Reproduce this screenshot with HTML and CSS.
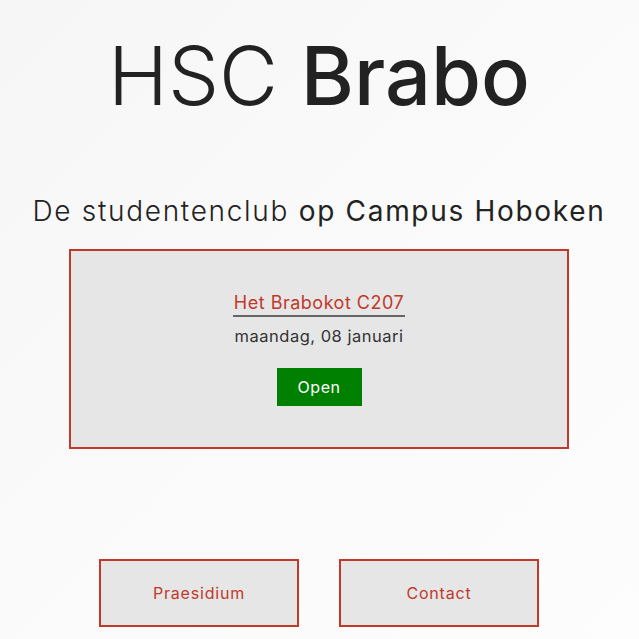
FILE: index.html
```html
<!DOCTYPE html>
<html lang="nl">
<head>
<meta charset="utf-8">
<title>HSC Brabo</title>
<link rel="stylesheet" href="styles.css">
</head>
<body>
<main class="page">
  <h1 class="title"><span class="title-light">HSC</span> <span class="title-bold">Brabo</span></h1>
  <h2 class="subtitle"><span class="subtitle-light">De studentenclub</span> op Campus Hoboken</h2>
  <section class="card">
    <a class="card-link" href="#">Het Brabokot C207</a>
    <p class="card-date">maandag, 08 januari</p>
    <span class="status">Open</span>
  </section>
  <nav class="links">
    <a class="link-box" href="#">Praesidium</a>
    <a class="link-box" href="#">Contact</a>
  </nav>
</main>
</body>
</html>
```

FILE: styles.css
```css
html, body {
  margin: 0;
  padding: 0;
  height: 100%;
}
body {
  background: linear-gradient(135deg, #f6f6f6 0%, #fafafa 50%, #fdfdfd 100%);
  font-family: Inter, "Noto Sans", "DejaVu Sans", sans-serif;
  color: #222;
}
.page {
  display: flex;
  flex-direction: column;
  align-items: center;
  padding: 28px 1px 0 0;
}
.title {
  margin: 0;
  font-size: 81px;
  line-height: 96px;
  font-weight: 300;
  color: #222;
}
.title-light { font-weight: 300; }
.title-bold { font-weight: 500; }
.subtitle {
  margin: 70px 0 0;
  font-size: 28px;
  line-height: 34px;
  font-weight: 400;
  letter-spacing: 1.7px;
  color: #222;
}
.subtitle-light { font-weight: 300; }
.card {
  margin-top: 21px;
  width: 496px;
  height: 196px;
  border: 2px solid #c0392b;
  background: #e6e6e6;
  display: flex;
  flex-direction: column;
  align-items: center;
}
.card-link {
  margin-top: 40px;
  font-size: 18px;
  line-height: 24px;
  letter-spacing: 0.5px;
  color: #c0392b;
  text-decoration: none;
  border-bottom: 2px solid #666;
  padding: 0 1px;
}
.card-date {
  margin: 8px 0 0;
  font-size: 16.5px;
  line-height: 22px;
  letter-spacing: 0.5px;
  color: #333;
  font-weight: 400;
}
.status {
  margin-top: 21px;
  width: 85px;
  height: 38px;
  display: flex;
  align-items: center;
  justify-content: center;
  background: #008000;
  color: #fff;
  font-size: 16px;
  letter-spacing: 0.5px;
}
.links {
  margin-top: 110px;
  display: flex;
  gap: 40px;
}
.link-box {
  width: 196px;
  height: 64px;
  border: 2px solid #c0392b;
  background: #e6e6e6;
  display: flex;
  align-items: center;
  justify-content: center;
  color: #c0392b;
  text-decoration: none;
  font-size: 16px;
  letter-spacing: 0.8px;
}
```
